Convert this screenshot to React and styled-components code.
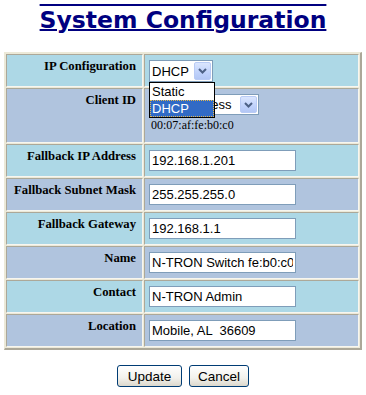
import React from 'react';
import styled, { createGlobalStyle } from 'styled-components';

const GlobalStyle = createGlobalStyle`
  body {
    margin: 0;
    background: #ffffff;
  }
`;

const Page = styled.div`
  width: 366px;
  display: flex;
  flex-direction: column;
  align-items: center;
  padding-top: 5px;
`;

const Title = styled.h1`
  margin: 0;
  font-family: "DejaVu Sans", Verdana, sans-serif;
  font-weight: bold;
  font-size: 23.5px;
  line-height: 30px;
  color: #000080;
  text-decoration: underline overline;
  text-decoration-thickness: 2px;
`;

const Frame = styled.div`
  margin-top: 17px;
  width: 358px;
  box-sizing: border-box;
  display: grid;
  grid-template-columns: 137px 1fr;
  gap: 1px;
  padding: 1px;
  background: #ece9d8;
  border: 1px solid;
  border-width: 1px 2px 2px 1px;
  border-color: #ece9d8 #aca899 #aca899 #ece9d8;
`;

const Cell = styled.div`
  box-sizing: border-box;
  height: ${p => (p.$tall ? 55 : 33)}px;
  background: ${p => (p.$alt ? '#b0c4de' : '#add8e6')};
  border: 1px solid;
  border-color: #aca899 #f7f6f0 #f7f6f0 #aca899;
`;

const Label = styled(Cell)`
  padding: 4px 6px 0 0;
  text-align: right;
  font-family: "Liberation Serif", "Times New Roman", serif;
  font-weight: bold;
  font-size: 12.7px;
  line-height: 15px;
  color: #000000;
`;

const Field = styled(Cell)`
  padding: 5px 0 0 4px;
  display: flex;
  flex-direction: column;
  align-items: flex-start;
`;

const TextBox = styled.input`
  box-sizing: border-box;
  width: 147px;
  height: 21px;
  margin: 0;
  padding: 0 2px;
  border: 1px solid #7f9db9;
  background: #ffffff;
  font-family: "Liberation Sans", Arial, sans-serif;
  font-size: 13px;
  color: #000000;
  outline: none;
`;

const SelectWrap = styled.div`
  position: relative;
`;

const SelectBox = styled.div`
  box-sizing: border-box;
  width: ${p => p.$width}px;
  height: ${p => p.$height}px;
  border: 1px solid #7f9db9;
  background: #ffffff;
  display: flex;
  align-items: center;
  padding: 1px 1px 1px 2px;
  font-family: "Liberation Sans", Arial, sans-serif;
  font-size: 13px;
  color: #000000;
`;

const SelectText = styled.span`
  flex: 1;
  overflow: hidden;
  white-space: nowrap;
`;

const ArrowButton = styled.span`
  box-sizing: border-box;
  width: 17px;
  align-self: stretch;
  display: flex;
  align-items: center;
  justify-content: center;
  border: 1px solid #b9cbf5;
  border-radius: 2px;
  background: linear-gradient(#dbe6fe, #c0d2fb 60%, #b3c7f5);
`;

const DropList = styled.div`
  position: absolute;
  top: 100%;
  left: 0;
  z-index: 2;
  box-sizing: border-box;
  width: 66px;
  border: 1px solid #000000;
  background: #ffffff;
  font-family: "Liberation Sans", Arial, sans-serif;
  font-size: 13px;
`;

const DropItem = styled.div`
  box-sizing: border-box;
  height: 17px;
  line-height: 15px;
  padding: 0 1px;
  border: 1px ${p => (p.$active ? 'dotted #e6b84c' : 'solid transparent')};
  background: ${p => (p.$active ? '#316ac5' : '#ffffff')};
  color: ${p => (p.$active ? '#ffffff' : '#000000')};
`;

const MacText = styled.div`
  margin: 3px 0 0 2px;
  font-family: "Liberation Serif", "Times New Roman", serif;
  font-size: 12px;
  color: #000000;
`;

const Buttons = styled.div`
  margin-top: 15px;
  display: flex;
  gap: 7px;
`;

const Button = styled.button`
  box-sizing: border-box;
  width: ${p => p.$width}px;
  height: 22px;
  padding: 0;
  border: 1px solid #003c74;
  border-radius: 3px;
  background: linear-gradient(#ffffff, #f2f1ec 60%, #dcd8cc);
  font-family: "Liberation Sans", Arial, sans-serif;
  font-size: 13.5px;
  color: #000000;
`;

const Chevron = () => (
  <svg width="9" height="6" viewBox="0 0 9 6">
    <polyline points="1,1 4.5,4.5 8,1" fill="none" stroke="#4d6185" strokeWidth="2" />
  </svg>
);

const Select = ({ width, height, value, children }) => (
  <SelectWrap>
    <SelectBox $width={width} $height={height}>
      <SelectText>{value}</SelectText>
      <ArrowButton>
        <Chevron />
      </ArrowButton>
    </SelectBox>
    {children}
  </SelectWrap>
);

const rows = [
  { label: 'Fallback IP Address', value: '192.168.1.201' },
  { label: 'Fallback Subnet Mask', value: '255.255.255.0', alt: true },
  { label: 'Fallback Gateway', value: '192.168.1.1' },
  { label: 'Name', value: 'N-TRON Switch fe:b0:c0', alt: true },
  { label: 'Contact', value: 'N-TRON Admin' },
  { label: 'Location', value: 'Mobile, AL  36609', alt: true },
];

export default function App() {
  return (
    <Page>
      <GlobalStyle />
      <Title>System Configuration</Title>
      <Frame>
        <Label>IP Configuration</Label>
        <Field>
          <Select width={64} height={22} value="DHCP">
            <DropList>
              <DropItem>Static</DropItem>
              <DropItem $active>DHCP</DropItem>
            </DropList>
          </Select>
        </Field>

        <Label $alt $tall>Client ID</Label>
        <Field $alt $tall>
          <Select width={110} height={21} value="MAC Address" />
          <MacText>00:07:af:fe:b0:c0</MacText>
        </Field>

        {rows.map(r => (
          <React.Fragment key={r.label}>
            <Label $alt={r.alt}>{r.label}</Label>
            <Field $alt={r.alt}>
              <TextBox defaultValue={r.value} readOnly />
            </Field>
          </React.Fragment>
        ))}
      </Frame>
      <Buttons>
        <Button $width={65}>Update</Button>
        <Button $width={60}>Cancel</Button>
      </Buttons>
    </Page>
  );
}
